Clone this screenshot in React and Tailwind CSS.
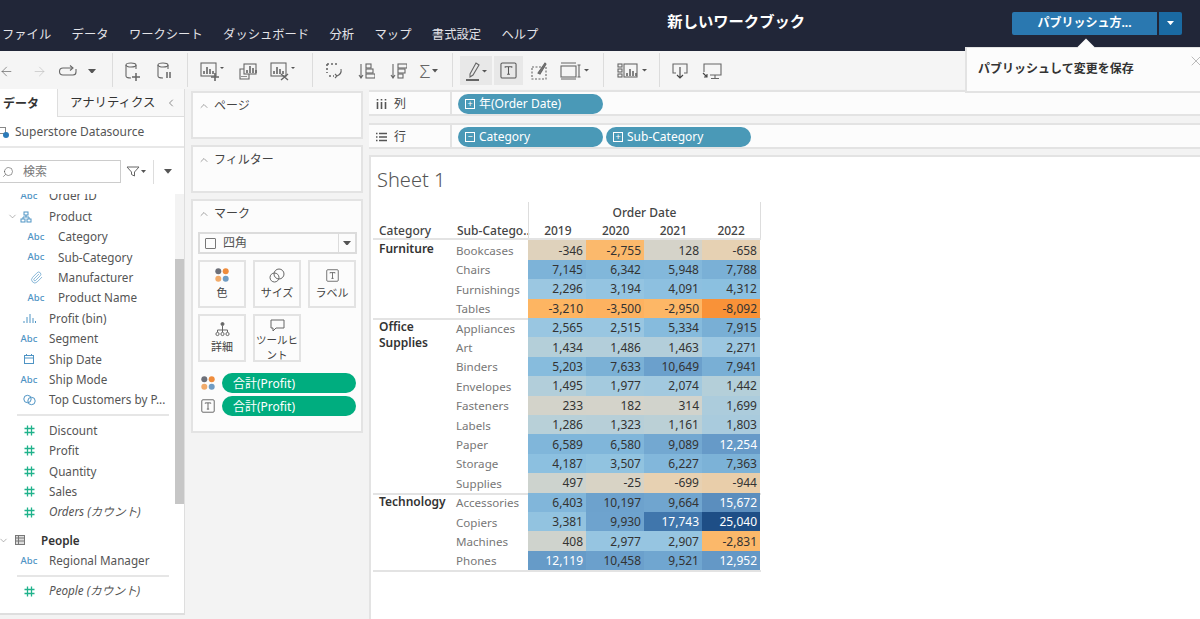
import React from 'react';
import { ArrowLeft, ArrowRight, ChevronDown, ChevronLeft, ChevronUp, Paperclip, Search, X } from 'lucide-react';

const FONT = '[font-family:"Noto_Sans","Noto_Sans_CJK_JP",sans-serif]';

const colorStops = [
    [-8092, [249, 146, 56]],
    [-3000, [253, 182, 100]],
    [-700, [231, 209, 178]],
    [128, [213, 211, 201]],
    [500, [205, 211, 206]],
    [1400, [181, 207, 217]],
    [2300, [155, 199, 225]],
    [4200, [140, 192, 224]],
    [7200, [125, 179, 216]],
    [10500, [107, 160, 204]],
    [15600, [92, 143, 191]],
    [17743, [64, 118, 172]],
    [25040, [30, 78, 134]],
];

const cellColor = (value) => {
    for (let i = 1; i < colorStops.length; i++) {
        const [v0, c0] = colorStops[i - 1];
        const [v1, c1] = colorStops[i];
        if (value <= v1) {
            const t = Math.max(0, (value - v0) / (v1 - v0));
            return `rgb(${c0.map((c, j) => Math.round(c + (c1[j] - c) * t)).join(',')})`;
        }
    }
    return 'rgb(30,78,134)';
};

const groups = [
    {
        name: ['Furniture'],
        rows: [
            ['Bookcases', -346, -2755, 128, -658],
            ['Chairs', 7145, 6342, 5948, 7788],
            ['Furnishings', 2296, 3194, 4091, 4312],
            ['Tables', -3210, -3500, -2950, -8092],
        ],
    },
    {
        name: ['Office', 'Supplies'],
        rows: [
            ['Appliances', 2565, 2515, 5334, 7915],
            ['Art', 1434, 1486, 1463, 2271],
            ['Binders', 5203, 7633, 10649, 7941],
            ['Envelopes', 1495, 1977, 2074, 1442],
            ['Fasteners', 233, 182, 314, 1699],
            ['Labels', 1286, 1323, 1161, 1803],
            ['Paper', 6589, 6580, 9089, 12254],
            ['Storage', 4187, 3507, 6227, 7363],
            ['Supplies', 497, -25, -699, -944],
        ],
    },
    {
        name: ['Technology'],
        rows: [
            ['Accessories', 6403, 10197, 9664, 15672],
            ['Copiers', 3381, 9930, 17743, 25040],
            ['Machines', 408, 2977, 2907, -2831],
            ['Phones', 12119, 10458, 9521, 12952],
        ],
    },
];

const menus = ['ファイル', 'データ', 'ワークシート', 'ダッシュボード', '分析', 'マップ', '書式設定', 'ヘルプ'];

const Svg = ({ w = 24, h = 24, children }) => (
    <svg width={w} height={h} viewBox={`0 0 ${w} ${h}`} fill="none" stroke="#666" strokeWidth="1.1" className="shrink-0">
        {children}
    </svg>
);

const Caret = ({ color = '#555', size = 7 }) => (
    <svg width={size} height={size * 0.6} viewBox="0 0 10 6"><path d="M0 0h10L5 6z" fill={color} /></svg>
);

const Bars = ({ x = 0, y = 0 }) => (
    <path d={`M${x + 4} ${y + 12}v-3M${x + 7} ${y + 12}v-7M${x + 10} ${y + 12}v-5M${x + 13} ${y + 12}v-3`} strokeWidth="1.6" />
);

const Cylinder = ({ children }) => (
    <Svg w={20} h={22}>
        <ellipse cx="8" cy="5" rx="5" ry="2" />
        <path d="M3 5v11q0 2 5 2M13 5v4" />
        {children}
    </Svg>
);

const TBox = ({ size = 18 }) => (
    <svg width={size} height={size} viewBox="0 0 18 18" fill="none" stroke="#555" strokeWidth="1.1">
        <rect x="1" y="1" width="16" height="16" rx="1.5" />
        <path d="M5.5 6V5h7v1M9 5v8M7.5 13h3" />
    </svg>
);

const Dots = ({ size = 14 }) => (
    <svg width={size} height={size} viewBox="0 0 14 14">
        <circle cx="3.3" cy="3.3" r="3" fill="#6d7079" />
        <circle cx="10.7" cy="3.3" r="3" fill="#ef8c3c" />
        <circle cx="3.3" cy="10.7" r="3" fill="#f2ab6a" />
        <circle cx="10.7" cy="10.7" r="3" fill="#6f9cc4" />
    </svg>
);

const Hash = () => (
    <svg width="11" height="11" viewBox="0 0 11 11" stroke="#1fb28b" strokeWidth="1.3">
        <path d="M3.5 0.5v10M7.5 0.5v10M0.5 3.5h10M0.5 7.5h10" />
    </svg>
);

const Abc = () => <span className="text-[9.5px] font-medium text-[#4f94c4]">Abc</span>;

const Field = ({ icon, label, indent = false, italic = false, bold = false }) => (
    <div className="flex h-[20.4px] items-center whitespace-nowrap text-[11.7px] text-[#555]">
        <span className={`flex justify-center ${indent ? 'w-[58px] pl-[14px]' : 'w-[49px] pl-[9px]'}`}>{icon}</span>
        <span className={`${italic ? 'italic' : ''} ${bold ? 'font-semibold text-[#333]' : ''}`}>{label}</span>
    </div>
);

// Group rows (Product, People) have a folding arrow in front of the icon
const FolderField = ({ arrowClass, icon, iconClass, label, bold = false }) => (
    <div className={`flex h-[20.4px] items-center whitespace-nowrap text-[11.7px] ${bold ? 'font-semibold text-[#333]' : 'text-[#555]'}`}>
        <ChevronDown size={11} strokeWidth={1.2} className={`shrink-0 text-[#777] ${arrowClass}`} />
        <span className={`flex justify-center ${iconClass}`}>{icon}</span>
        {label}
    </div>
);

const Sep = () => <div className="mx-[17px] my-[4px] h-[2px] w-[152px] bg-[#e6e6e6]" />;

const Card = ({ title, children, className }) => (
    <div className={`border-2 border-[#e3e3e3] bg-[#fcfcfc] ${className}`}>
        <div className="flex items-center gap-[4px] pl-[5px] pt-[4px] text-[12px] text-[#444]">
            <ChevronUp size={12} strokeWidth={1.2} className="text-[#666]" />
            {title}
        </div>
        {children}
    </div>
);

const MarkButton = ({ icon, label }) => (
    <div className="flex h-[48px] w-[48px] flex-col items-center justify-start border-2 border-[#e3e3e3] pt-[3px] text-center text-[11px] leading-[15px] text-[#444]">
        <div className="flex h-[20px] items-center">{icon}</div>
        <div>{label}</div>
    </div>
);

const Pill = ({ sign, label }) => (
    <div className="flex h-[20px] w-[145px] items-center gap-[4px] rounded-full bg-[#4a99b7] pl-[7px] text-[12px] text-white">
        <span className="flex h-[10px] w-[10px] items-center justify-center border border-white text-[9px] leading-none">{sign}</span>
        <span className="pt-[1px]">{label}</span>
    </div>
);

const Shelf = ({ icon, label, children }) => (
    <div className="flex h-[26px] border-y-2 border-[#e3e3e3] bg-[#fcfcfc]">
        <div className="flex w-[83px] items-center gap-[7px] border-r-2 border-[#e3e3e3] pl-[7px] pt-[1px] text-[12px] text-[#444]">
            {icon}
            {label}
        </div>
        <div className="flex items-center gap-[3px] pl-[6px] pt-[1px]">{children}</div>
    </div>
);

const Slot = ({ w, children, className = '' }) => (
    <div className={`flex h-full items-center justify-center ${className}`} style={{ width: w }}>
        {children}
    </div>
);

const ToolSep = () => <div className="mx-[1px] h-[34px] w-[1px] shrink-0 bg-[#dcdcdc]" />;

const Toolbar = () => (
    <div className="flex h-[38px] items-center overflow-hidden bg-[#f5f5f5]">
        <div className="ml-[-10px] flex h-full shrink-0 pt-[2px]">
            <Slot w={32}><ArrowLeft size={15} strokeWidth={1} className="text-[#555]" /></Slot>
            <Slot w={34}><ArrowRight size={15} strokeWidth={1} className="text-[#bbb]" /></Slot>
            <Slot w={24}>
                <Svg w={20} h={12}>
                    <path d="M14 3H5a3 3 0 0 0 0 7h10a3 3 0 0 0 3-3V4" />
                    <path d="M12 0.5l3 2.5-3 2.5" />
                </Svg>
            </Slot>
            <Slot w={24}><Caret size={8} /></Slot>
            <Slot w={7} />
        </div>
        <ToolSep />
        <div className="flex h-full shrink-0 pt-[2px]">
            <Slot w={38}>
                <Cylinder><path d="M13 13v8M9 17h8" strokeWidth="1.5" /></Cylinder>
            </Slot>
            <Slot w={26}>
                <Cylinder><path d="M12 12v6M15 12v6" strokeWidth="1.5" /></Cylinder>
            </Slot>
            <Slot w={8} />
        </div>
        <ToolSep />
        <div className="flex h-full shrink-0 pt-[2px]">
            <Slot w={45}>
                <Svg w={24} h={20}>
                    <rect x="1" y="2" width="15" height="13" />
                    <Bars x={0} y={1} />
                    <path d="M15 12v8M11 16h8" strokeWidth="1.6" />
                    <path d="M20 6h4l-2 2z" fill="#555" stroke="none" />
                </Svg>
            </Slot>
            <Slot w={28}>
                <Svg w={18} h={17}>
                    <rect x="5" y="1" width="12" height="10" fill="#f5f5f5" />
                    <Bars x={4} y={-2} />
                    <path d="M5 6H1v10h9v-5" />
                    <path d="M3 14v-1M5 14v-1M7 14v-1" strokeWidth="1.4" />
                </Svg>
            </Slot>
            <Slot w={42}>
                <Svg w={26} h={20}>
                    <rect x="1" y="2" width="15" height="13" />
                    <Bars x={0} y={1} />
                    <path d="M11 13l7 6M18 13l-7 6" strokeWidth="1.4" />
                    <path d="M21 6h4l-2 2z" fill="#555" stroke="none" />
                </Svg>
            </Slot>
            <Slot w={7} />
        </div>
        <ToolSep />
        <div className="flex h-full shrink-0 pt-[2px]">
            <Slot w={42}>
                <Svg w={20} h={18}>
                    <path strokeDasharray="2 2" d="M2 2h10M2 2v9M4 14h5" strokeWidth="1.6" />
                    <path d="M16 7q1 5-4 7M10 12l2 2-2 2" />
                </Svg>
            </Slot>
            <Slot w={20}>
                <Svg w={18} h={18}>
                    <path d="M4 2v13M2 13l2 3 2-3" />
                    <rect x="9" y="2" width="5" height="4" /><rect x="9" y="7" width="7" height="4" /><rect x="9" y="12" width="9" height="4" />
                </Svg>
            </Slot>
            <Slot w={44}>
                <Svg w={18} h={18}>
                    <path d="M4 2v13M2 13l2 3 2-3" />
                    <rect x="9" y="2" width="9" height="4" /><rect x="9" y="7" width="7" height="4" /><rect x="9" y="12" width="5" height="4" />
                </Svg>
            </Slot>
            <Slot w={18}>
                <span className="text-[19px] font-light leading-none text-[#666]">Σ</span>
                <span className="ml-[2px]"><Caret size={6} /></span>
            </Slot>
            <Slot w={13} />
        </div>
        <ToolSep />
        <div className="ml-[6px] flex h-full shrink-0 items-center pt-[1px]">
            <div className="h-[29px]">
                <Slot w={32} className="bg-[#e8e8e8]">
                    <Svg w={22} h={20}>
                        <path d="M5 13L11 2l3 2-6 10-3 2z" />
                        <path d="M1 19h13" stroke="#444" strokeWidth="1.6" />
                        <path d="M17 9h5l-2.5 2.5z" fill="#555" stroke="none" />
                    </Svg>
                </Slot>
            </div>
            <div className="ml-[2px] h-[29px]"><Slot w={29} className="bg-[#e8e8e8]"><TBox size={17} /></Slot></div>
            <Slot w={34}>
                <Svg w={18} h={18}>
                    <path strokeDasharray="2 1.5" d="M1 5h14v12H1z" />
                    <path d="M7 11l7-10 1 1-6 10z" fill="#777" />
                </Svg>
            </Slot>
            <Slot w={36}>
                <Svg w={30} h={18}>
                    <path d="M1 1h15M1 17h15" />
                    <rect x="1" y="4" width="15" height="11" />
                    <path d="M19 3v12M17.5 3h3M17.5 15h3" />
                    <path d="M24 7h5l-2.5 2.5z" fill="#555" stroke="none" />
                </Svg>
            </Slot>
            <Slot w={9} />
        </div>
        <ToolSep />
        <div className="flex h-full shrink-0 pt-[2px]">
            <Slot w={53}>
                <Svg w={30} h={16}>
                    <rect x="1" y="1" width="4" height="3" /><rect x="1" y="6" width="4" height="3" /><rect x="1" y="11" width="4" height="3" />
                    <rect x="7" y="1" width="13" height="13" />
                    <Bars x={6} y={1} />
                    <path d="M25 6h5l-2.5 2.5z" fill="#555" stroke="none" />
                </Svg>
            </Slot>
        </div>
        <ToolSep />
        <div className="flex h-full shrink-0 pt-[2px]">
            <Slot w={38}>
                <Svg w={16} h={18}>
                    <path d="M4 11H1V2h14v9h-3" />
                    <path d="M8 5v11M5 13l3 3 3-3" stroke="#444" />
                </Svg>
            </Slot>
            <Slot w={26}>
                <Svg w={20} h={18}>
                    <path d="M2 10V2h17v11H8M13 13v3M9 16.5h8" />
                    <path d="M1 11l4 4M5 12v3H2" stroke="#444" />
                </Svg>
            </Slot>
        </div>
    </div>
);

const DataPanel = () => (
    <div className="flex h-[526px] w-[185px] shrink-0 flex-col border-b-2 border-r border-[#dedede] bg-white">
        <div className="flex h-[28px] shrink-0 text-[#333]">
            <div className="flex w-[57px] items-center pl-[3px] pt-[2px] text-[12px] font-bold">データ</div>
            <div className="flex flex-1 items-center border-b border-l border-[#dedede] bg-[#f8f8f8] pl-[12px] pt-[1px] text-[12.4px]">
                アナリティクス
                <ChevronLeft size={12} strokeWidth={1.2} className="ml-[10px] text-[#444]" />
            </div>
        </div>
        <div className="flex h-[31px] shrink-0 items-center gap-[6px] border-b-2 border-[#e8e8e8] pt-[1px] text-[12px] text-[#555]">
            <span className="relative ml-[-1px] h-[11px] w-[10px]">
                <span className="absolute left-0 top-0 h-[7px] w-[7px] border border-[#888]" />
                <span className="absolute bottom-0 right-0 h-[6px] w-[6px] rounded-full bg-[#2b7ab8]" />
            </span>
            Superstore Datasource
        </div>
        <div className="flex h-[46px] shrink-0 items-center pt-[1px]">
            <div className="flex h-[23px] w-[121px] items-center border border-l-0 border-[#ccc] pl-[2px] text-[12px] text-[#777]">
                <Search size={12} strokeWidth={1.2} className="-scale-x-100 text-[#555]" />
                <span className="ml-[9px] pt-[1px]">検索</span>
            </div>
            <svg width="14" height="11" viewBox="0 0 14 11" fill="none" stroke="#666" className="ml-[5px]"><path d="M1 1h12L8.5 6v4L5.5 8.5V6z" /></svg>
            <span className="ml-[1px]"><Caret size={5} /></span>
            <div className="ml-[7px] mr-[10px] h-[24px] w-[1px] bg-[#ddd]" />
            <Caret size={8} />
        </div>
        <div className="flex min-h-0 flex-1">
            <div className="min-w-0 flex-1 overflow-hidden">
                <div className="mt-[-8px]">
                    <Field icon={<Abc />} label="Order ID" />
                    <FolderField
                        arrowClass="ml-[7px]"
                        iconClass="w-[16px] mr-[15px]"
                        icon={<svg width="12" height="12" viewBox="0 0 12 12" fill="none" stroke="#4f94c4"><rect x="4" y="1" width="4" height="3" /><rect x="1" y="8" width="4" height="3" /><rect x="7" y="8" width="4" height="3" /><path d="M6 4v2M3 8V6h6v2" /></svg>}
                        label="Product"
                    />
                    <Field indent icon={<Abc />} label="Category" />
                    <Field indent icon={<Abc />} label="Sub-Category" />
                    <Field indent icon={<Paperclip size={13} strokeWidth={1.2} className="text-[#4f94c4]" />} label="Manufacturer" />
                    <Field indent icon={<Abc />} label="Product Name" />
                    <Field icon={<svg width="13" height="9" viewBox="0 0 13 9" stroke="#4f94c4"><path d="M1 9V7M4 9V3M7 9V0M10 9V4M12.5 9V7" /></svg>} label="Profit (bin)" />
                    <Field icon={<Abc />} label="Segment" />
                    <Field icon={<svg width="10" height="10" viewBox="0 0 10 10" fill="none" stroke="#4f94c4"><rect x="0.5" y="1.5" width="9" height="8" /><path d="M0.5 4h9M2.5 0v2M7.5 0v2" /></svg>} label="Ship Date" />
                    <Field icon={<Abc />} label="Ship Mode" />
                    <Field icon={<svg width="13" height="12" viewBox="0 0 13 12" fill="none" stroke="#4f94c4"><circle cx="4.5" cy="5" r="3.7" /><circle cx="8.5" cy="7" r="3.7" /></svg>} label="Top Customers by P..." />
                    <Sep />
                    <Field icon={<Hash />} label="Discount" />
                    <Field icon={<Hash />} label="Profit" />
                    <Field icon={<Hash />} label="Quantity" />
                    <Field icon={<Hash />} label="Sales" />
                    <Field italic icon={<Hash />} label="Orders (カウント)" />
                    <div className="h-[8px]" />
                    <FolderField
                        bold
                        arrowClass="ml-[-2px]"
                        iconClass="w-[20px] pl-[1px] mr-[12px]"
                        icon={<svg width="10" height="10" viewBox="0 0 10 10" fill="#ddd" stroke="#777"><rect x="0.5" y="0.5" width="9" height="9" /><path d="M0.5 3h9M0.5 6h9M3.5 0.5v9" /></svg>}
                        label="People"
                    />
                    <Field icon={<Abc />} label="Regional Manager" />
                    <Sep />
                    <Field italic icon={<Hash />} label="People (カウント)" />
                </div>
            </div>
            <div className="w-[9px] shrink-0">
                <div className="h-[65px] bg-[#f3f3f3]" />
                <div className="h-[245px] bg-[#c6c6c6]" />
            </div>
        </div>
    </div>
);

const MarksColumn = () => (
    <div className="ml-[6px] flex w-[172px] shrink-0 flex-col gap-[6px] pt-[2px]">
        <Card title="ページ" className="h-[48px]" />
        <Card title="フィルター" className="h-[48px]" />
        <Card title="マーク" className="h-[234px]">
            <div className="mx-[5px] mt-[9px] flex h-[22px] w-[159px] items-center border-2 border-[#dcdcdc] text-[12px] text-[#555]">
                <span className="ml-[5px] mr-[7px] h-[11px] w-[11px] rounded-[1px] border border-[#777]" />
                四角
                <span className="ml-auto flex h-full w-[17px] items-center justify-center border-l border-[#dcdcdc]"><Caret size={8} /></span>
            </div>
            <div className="mx-[5px] mt-[6px] flex gap-[7px]">
                <MarkButton icon={<Dots />} label="色" />
                <MarkButton
                    icon={<svg width="16" height="15" viewBox="0 0 16 15" fill="none" stroke="#666"><circle cx="5.5" cy="9.5" r="4.5" /><circle cx="10" cy="6" r="5" /></svg>}
                    label="サイズ"
                />
                <MarkButton icon={<TBox size={13} />} label="ラベル" />
            </div>
            <div className="mx-[5px] mt-[6px] flex gap-[7px]">
                <MarkButton
                    icon={<svg width="15" height="15" viewBox="0 0 15 15" fill="none" stroke="#666"><circle cx="7.5" cy="2" r="1.5" fill="#666" /><path d="M7.5 4v4M2.5 10V8h10v2M7.5 8v2" /><circle cx="2.5" cy="12" r="1.6" /><circle cx="7.5" cy="12" r="1.6" /><circle cx="12.5" cy="12" r="1.6" /></svg>}
                    label="詳細"
                />
                <MarkButton
                    icon={<svg width="15" height="14" viewBox="0 0 15 14" fill="none" stroke="#666"><path d="M1 1h13v8H6l-3 3V9H1z" /></svg>}
                    label={<span className="block text-[10.5px]">ツールヒント</span>}
                />
            </div>
            <div className="mt-[11px] flex flex-col gap-[3px] pl-[8px]">
                <div className="flex items-center gap-[7px]">
                    <Dots />
                    <div className="flex h-[20px] w-[134px] items-center rounded-full bg-[#00ad7f] pl-[11px] pt-[1px] text-[12px] text-white">合計(Profit)</div>
                </div>
                <div className="flex items-center gap-[7px]">
                    <TBox size={14} />
                    <div className="flex h-[20px] w-[134px] items-center rounded-full bg-[#00ad7f] pl-[11px] pt-[1px] text-[12px] text-white">合計(Profit)</div>
                </div>
            </div>
        </Card>
    </div>
);

const Viz = () => (
    <div className="mt-[-1px] min-h-0 flex-1 border-l-2 border-t-2 border-[#e3e3e3] bg-white pl-[2px]">
        <div className="h-[45px] pl-[4px] pt-[10px] text-[20px] font-light leading-[26px] text-[#555]">Sheet 1</div>
        <div className="w-[388px] text-[12px]">
            <div className="flex">
                <div className="w-[155px]" />
                <div className="h-[19px] w-[233px] border-x border-[#ddd] text-center font-medium leading-[21px] text-[#444]">Order Date</div>
            </div>
            <div className="flex h-[19.4px] border-b-2 border-[#e3e3e3] font-medium leading-[20px] text-[#444]">
                <div className="w-[80px] pl-[6px]">Category</div>
                <div className="w-[75px] whitespace-nowrap pl-[4px]">Sub-Catego..</div>
                <div className="flex w-[233px] border-x border-[#ddd]">
                    {['2019', '2020', '2021', '2022'].map((y) => (
                        <div key={y} className="w-[58px] text-center">{y}</div>
                    ))}
                </div>
            </div>
            {groups.map((g) => (
                <div key={g.name[0]} className="mb-[-2px] flex border-b-2 border-[#e3e3e3]">
                    <div className="w-[80px] pl-[6px] pt-[1px] font-semibold leading-[16px] text-[#333]">
                        {g.name.map((n) => <div key={n}>{n}</div>)}
                    </div>
                    <div>
                        {g.rows.map(([label, ...values]) => (
                            <div key={label} className="flex h-[19.41px] items-center">
                                <div className="w-[75px] pl-[3px] pt-[1px] text-[11.6px] text-[#777]">{label}</div>
                                {values.map((v, i) => (
                                    <div
                                        key={i}
                                        className={`flex h-full w-[58px] items-center justify-end pr-[3px] pt-[1px] ${v > 12000 ? 'text-white' : 'text-[#333]'}`}
                                        style={{ backgroundColor: cellColor(v) }}
                                    >
                                        {v.toLocaleString('en-US')}
                                    </div>
                                ))}
                            </div>
                        ))}
                    </div>
                </div>
            ))}
        </div>
    </div>
);

export default function App() {
    return (
        <div className={`relative h-[619px] w-[1200px] overflow-hidden bg-[#f3f3f3] ${FONT}`}>
            <header className="flex h-[51px] items-center bg-[#212638] text-white">
                <nav className="mt-[19px] flex gap-[20.4px] pl-[2px] text-[12.3px] text-[#e4e4e8]">
                    {menus.map((m) => <span key={m}>{m}</span>)}
                </nav>
                <div className="mb-[8px] ml-[129px] text-[15.3px] font-bold">新しいワークブック</div>
                <div className="mb-[5px] ml-auto mr-[18px] flex h-[23px] gap-[2px]">
                    <div className="flex w-[145px] items-center justify-center rounded-l-[2px] bg-[#2a78b0] text-[12px] font-bold">パブリッシュ方...</div>
                    <div className="flex w-[23px] items-center justify-center rounded-r-[2px] bg-[#1a6aa2]"><Caret color="#fff" size={7} /></div>
                </div>
            </header>
            <Toolbar />
            <main className="flex">
                <DataPanel />
                <MarksColumn />
                <div className="ml-[6px] flex h-[530px] min-w-0 flex-1 flex-col gap-[7px] pt-[1px]">
                    <Shelf
                        icon={<svg width="11" height="10" viewBox="0 0 11 10" stroke="#555" strokeWidth="1.6"><path d="M1.5 3v7M5.5 3v7M9.5 3v7M1.5 0v1.5M5.5 0v1.5M9.5 0v1.5" /></svg>}
                        label="列"
                    >
                        <Pill sign="+" label="年(Order Date)" />
                    </Shelf>
                    <Shelf
                        icon={<svg width="11" height="10" viewBox="0 0 11 10" stroke="#555" strokeWidth="1.4"><path d="M3 1.5h8M3 5h8M3 8.5h8M0 1.5h1.5M0 5h1.5M0 8.5h1.5" /></svg>}
                        label="行"
                    >
                        <Pill sign="−" label="Category" />
                        <Pill sign="+" label="Sub-Category" />
                    </Shelf>
                    <Viz />
                </div>
            </main>
            <div className="absolute left-[965px] top-[47px] h-[46px] w-[240px] border-2 border-t border-[#e3e3e3] bg-[#fcfcfc] pl-[11px] pt-[12px] text-[12px] font-bold text-[#333]">
                <div className="absolute left-[113px] top-[-7px] h-[12px] w-[12px] rotate-45 bg-[#fcfcfc]" />
                <span className="relative">パブリッシュして変更を保存</span>
                <X size={16} strokeWidth={1.2} className="absolute left-[221px] top-[5px] text-[#aaa]" />
            </div>
        </div>
    );
}
